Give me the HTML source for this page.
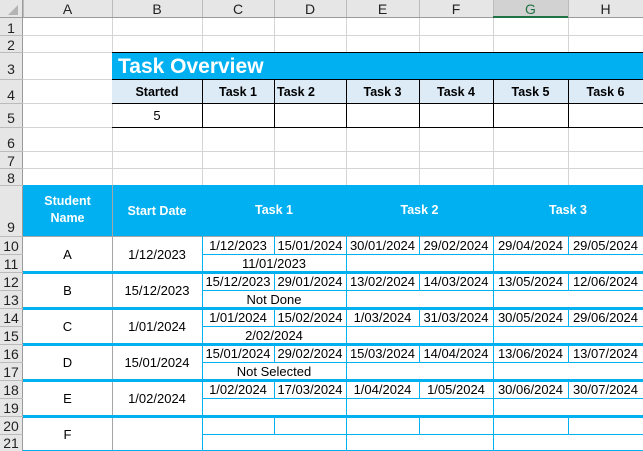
<!DOCTYPE html>
<html><head><meta charset="utf-8"><style>
*{margin:0;padding:0;box-sizing:border-box}
body{width:643px;height:451px;overflow:hidden;background:#fff;font-family:"Liberation Sans",Arial,sans-serif;position:relative;color:#000}
div{position:absolute}
.t{display:flex;align-items:center;justify-content:center;font-size:13px;white-space:nowrap}
.b{font-weight:bold;font-size:12.5px}
.w{color:#fff}
.h{background:#e6e6e6}
.g{background:#d4d4d4}
.k{background:#000}
.c{background:#00b0f0}
.m{background:#a6a6a6}
.rn{font-size:14px;color:#222}
</style></head><body>
<div class="h" style="left:0;top:0;width:643px;height:18px"></div>
<div class="h" style="left:0;top:0;width:23px;height:451px"></div>
<div style="left:493px;top:0;width:75px;height:18px;background:#d2d2d2"></div>
<div style="left:8px;top:5px;width:0;height:0;border-left:10px solid transparent;border-bottom:10px solid #b4b4b4"></div>
<div class="g" style="left:112px;top:18px;width:1px;height:167px"></div>
<div class="g" style="left:202px;top:18px;width:1px;height:167px"></div>
<div class="g" style="left:274px;top:18px;width:1px;height:167px"></div>
<div class="g" style="left:346px;top:18px;width:1px;height:167px"></div>
<div class="g" style="left:419px;top:18px;width:1px;height:167px"></div>
<div class="g" style="left:493px;top:18px;width:1px;height:167px"></div>
<div class="g" style="left:568px;top:18px;width:1px;height:167px"></div>
<div class="g" style="left:23px;top:35px;width:620px;height:1px"></div>
<div class="g" style="left:23px;top:52px;width:620px;height:1px"></div>
<div class="g" style="left:23px;top:79px;width:90px;height:1px"></div>
<div class="g" style="left:23px;top:103px;width:90px;height:1px"></div>
<div class="g" style="left:23px;top:127px;width:90px;height:1px"></div>
<div class="g" style="left:23px;top:151px;width:620px;height:1px"></div>
<div class="g" style="left:23px;top:168px;width:620px;height:1px"></div>
<div style="left:23px;top:0;width:1px;height:18px;background:#bbb"></div>
<div style="left:112px;top:0;width:1px;height:18px;background:#bbb"></div>
<div style="left:202px;top:0;width:1px;height:18px;background:#bbb"></div>
<div style="left:274px;top:0;width:1px;height:18px;background:#bbb"></div>
<div style="left:346px;top:0;width:1px;height:18px;background:#bbb"></div>
<div style="left:419px;top:0;width:1px;height:18px;background:#bbb"></div>
<div style="left:493px;top:0;width:1px;height:18px;background:#bbb"></div>
<div style="left:568px;top:0;width:1px;height:18px;background:#bbb"></div>
<div style="left:0;top:17px;width:643px;height:1px;background:#9b9b9b"></div>
<div style="left:493px;top:16px;width:75px;height:2px;background:#217346"></div>
<div style="left:22px;top:0;width:1px;height:451px;background:#9b9b9b"></div>
<div class="t rn" style="left:23px;top:0;width:89px;height:18px">A</div>
<div class="t rn" style="left:112px;top:0;width:90px;height:18px">B</div>
<div class="t rn" style="left:202px;top:0;width:72px;height:18px">C</div>
<div class="t rn" style="left:274px;top:0;width:72px;height:18px">D</div>
<div class="t rn" style="left:346px;top:0;width:73px;height:18px">E</div>
<div class="t rn" style="left:419px;top:0;width:74px;height:18px">F</div>
<div class="t rn" style="left:493px;top:0;width:75px;height:18px;color:#217346">G</div>
<div class="t rn" style="left:568px;top:0;width:75px;height:18px">H</div>
<div style="left:0;top:35px;width:23px;height:1px;background:#bbb"></div>
<div style="left:0;top:52px;width:23px;height:1px;background:#bbb"></div>
<div style="left:0;top:79px;width:23px;height:1px;background:#bbb"></div>
<div style="left:0;top:103px;width:23px;height:1px;background:#bbb"></div>
<div style="left:0;top:127px;width:23px;height:1px;background:#bbb"></div>
<div style="left:0;top:151px;width:23px;height:1px;background:#bbb"></div>
<div style="left:0;top:168px;width:23px;height:1px;background:#bbb"></div>
<div style="left:0;top:185px;width:23px;height:1px;background:#bbb"></div>
<div style="left:0;top:236px;width:23px;height:1px;background:#bbb"></div>
<div style="left:0;top:254px;width:23px;height:1px;background:#bbb"></div>
<div style="left:0;top:272px;width:23px;height:1px;background:#bbb"></div>
<div style="left:0;top:290px;width:23px;height:1px;background:#bbb"></div>
<div style="left:0;top:308px;width:23px;height:1px;background:#bbb"></div>
<div style="left:0;top:326px;width:23px;height:1px;background:#bbb"></div>
<div style="left:0;top:344px;width:23px;height:1px;background:#bbb"></div>
<div style="left:0;top:362px;width:23px;height:1px;background:#bbb"></div>
<div style="left:0;top:380px;width:23px;height:1px;background:#bbb"></div>
<div style="left:0;top:398px;width:23px;height:1px;background:#bbb"></div>
<div style="left:0;top:416px;width:23px;height:1px;background:#bbb"></div>
<div style="left:0;top:434px;width:23px;height:1px;background:#bbb"></div>
<div class="t rn" style="left:0;top:19px;width:22px;height:17px">1</div>
<div class="t rn" style="left:0;top:36px;width:22px;height:17px">2</div>
<div class="t rn" style="left:0;top:58px;width:22px;height:22px">3</div>
<div class="t rn" style="left:0;top:85px;width:22px;height:20px">4</div>
<div class="t rn" style="left:0;top:108px;width:22px;height:20px">5</div>
<div class="t rn" style="left:0;top:134px;width:22px;height:18px">6</div>
<div class="t rn" style="left:0;top:152px;width:22px;height:17px">7</div>
<div class="t rn" style="left:0;top:169px;width:22px;height:17px">8</div>
<div class="t rn" style="left:0;top:218px;width:22px;height:18px">9</div>
<div class="t rn" style="left:0;top:237px;width:22px;height:17px">10</div>
<div class="t rn" style="left:0;top:255px;width:22px;height:17px">11</div>
<div class="t rn" style="left:0;top:273px;width:22px;height:17px">12</div>
<div class="t rn" style="left:0;top:291px;width:22px;height:17px">13</div>
<div class="t rn" style="left:0;top:309px;width:22px;height:17px">14</div>
<div class="t rn" style="left:0;top:327px;width:22px;height:17px">15</div>
<div class="t rn" style="left:0;top:345px;width:22px;height:17px">16</div>
<div class="t rn" style="left:0;top:363px;width:22px;height:17px">17</div>
<div class="t rn" style="left:0;top:381px;width:22px;height:17px">18</div>
<div class="t rn" style="left:0;top:399px;width:22px;height:17px">19</div>
<div class="t rn" style="left:0;top:417px;width:22px;height:17px">20</div>
<div class="t rn" style="left:0;top:435px;width:22px;height:16px">21</div>

<div class="c" style="left:112px;top:52px;width:531px;height:27px"></div>
<div class="w" style="left:118px;top:55px;font-size:21px;font-weight:bold">Task Overview</div>
<div style="left:112px;top:79px;width:531px;height:24px;background:#ddebf7"></div>
<div class="k" style="left:112px;top:52px;width:531px;height:1px"></div>
<div class="k" style="left:112px;top:79px;width:531px;height:1px"></div>
<div class="k" style="left:112px;top:103px;width:531px;height:1px"></div>
<div class="k" style="left:112px;top:127px;width:531px;height:1px"></div>
<div class="k" style="left:202px;top:79px;width:1px;height:48px"></div>
<div class="k" style="left:274px;top:79px;width:1px;height:48px"></div>
<div class="k" style="left:346px;top:79px;width:1px;height:48px"></div>
<div class="k" style="left:419px;top:79px;width:1px;height:48px"></div>
<div class="k" style="left:493px;top:79px;width:1px;height:48px"></div>
<div class="k" style="left:568px;top:79px;width:1px;height:48px"></div>
<div class="t b" style="left:112px;top:80px;width:90px;height:23px">Started</div>
<div class="t b" style="left:202px;top:80px;width:72px;height:23px">Task 1</div>
<div class="t b" style="left:275px;top:80px;width:42px;height:23px">Task 2</div>
<div class="t b" style="left:346px;top:80px;width:73px;height:23px">Task 3</div>
<div class="t b" style="left:419px;top:80px;width:74px;height:23px">Task 4</div>
<div class="t b" style="left:493px;top:80px;width:75px;height:23px">Task 5</div>
<div class="t b" style="left:568px;top:80px;width:75px;height:23px">Task 6</div>
<div class="t" style="left:112px;top:104px;width:90px;height:23px">5</div>

<div class="c" style="left:23px;top:185px;width:620px;height:51px"></div>
<div style="left:112px;top:185px;width:1px;height:51px;background:#a6a6a6"></div>
<div class="t b w" style="left:23px;top:192px;width:89px;height:36px;text-align:center;line-height:17px">Student<br>Name</div>
<div class="t b w" style="left:112px;top:202px;width:90px;height:18px">Start Date</div>
<div class="t b w" style="left:202px;top:201px;width:144px;height:18px">Task 1</div>
<div class="t b w" style="left:346px;top:201px;width:147px;height:18px">Task 2</div>
<div class="t b w" style="left:493px;top:201px;width:150px;height:18px">Task 3</div>

<div class="m" style="left:23px;top:236px;width:620px;height:1px"></div>
<div class="m" style="left:112px;top:236px;width:1px;height:215px"></div>
<div class="c" style="left:202px;top:236px;width:1px;height:215px"></div>
<div class="c" style="left:23px;top:271px;width:620px;height:3px"></div>
<div class="c" style="left:23px;top:307px;width:620px;height:3px"></div>
<div class="c" style="left:23px;top:343px;width:620px;height:3px"></div>
<div class="c" style="left:23px;top:379px;width:620px;height:3px"></div>
<div class="c" style="left:23px;top:415px;width:620px;height:3px"></div>
<div class="c" style="left:23px;top:450px;width:620px;height:1px"></div>
<div class="c" style="left:202px;top:254px;width:441px;height:1px"></div>
<div class="c" style="left:202px;top:290px;width:441px;height:1px"></div>
<div class="c" style="left:202px;top:326px;width:441px;height:1px"></div>
<div class="c" style="left:202px;top:362px;width:441px;height:1px"></div>
<div class="c" style="left:202px;top:398px;width:441px;height:1px"></div>
<div class="c" style="left:202px;top:434px;width:441px;height:1px"></div>
<div class="c" style="left:346px;top:236px;width:1px;height:215px"></div>
<div class="c" style="left:493px;top:236px;width:1px;height:215px"></div>
<div class="c" style="left:274px;top:236px;width:1px;height:18px"></div>
<div class="c" style="left:419px;top:236px;width:1px;height:18px"></div>
<div class="c" style="left:568px;top:236px;width:1px;height:18px"></div>
<div class="c" style="left:274px;top:272px;width:1px;height:18px"></div>
<div class="c" style="left:419px;top:272px;width:1px;height:18px"></div>
<div class="c" style="left:568px;top:272px;width:1px;height:18px"></div>
<div class="c" style="left:274px;top:308px;width:1px;height:18px"></div>
<div class="c" style="left:419px;top:308px;width:1px;height:18px"></div>
<div class="c" style="left:568px;top:308px;width:1px;height:18px"></div>
<div class="c" style="left:274px;top:344px;width:1px;height:18px"></div>
<div class="c" style="left:419px;top:344px;width:1px;height:18px"></div>
<div class="c" style="left:568px;top:344px;width:1px;height:18px"></div>
<div class="c" style="left:274px;top:380px;width:1px;height:18px"></div>
<div class="c" style="left:419px;top:380px;width:1px;height:18px"></div>
<div class="c" style="left:568px;top:380px;width:1px;height:18px"></div>
<div class="c" style="left:274px;top:416px;width:1px;height:18px"></div>
<div class="c" style="left:419px;top:416px;width:1px;height:18px"></div>
<div class="c" style="left:568px;top:416px;width:1px;height:18px"></div>

<div class="t" style="left:23px;top:237px;width:89px;height:34px">A</div>
<div class="t" style="left:112px;top:237px;width:90px;height:34px">1/12/2023</div>
<div class="t" style="left:23px;top:274px;width:89px;height:33px">B</div>
<div class="t" style="left:112px;top:274px;width:90px;height:33px">15/12/2023</div>
<div class="t" style="left:23px;top:310px;width:89px;height:33px">C</div>
<div class="t" style="left:112px;top:310px;width:90px;height:33px">1/01/2024</div>
<div class="t" style="left:23px;top:346px;width:89px;height:33px">D</div>
<div class="t" style="left:112px;top:346px;width:90px;height:33px">15/01/2024</div>
<div class="t" style="left:23px;top:382px;width:89px;height:33px">E</div>
<div class="t" style="left:112px;top:382px;width:90px;height:33px">1/02/2024</div>
<div class="t" style="left:23px;top:418px;width:89px;height:32px">F</div>

<div class="t" style="left:202px;top:237px;width:72px;height:17px">1/12/2023</div>
<div class="t" style="left:274px;top:237px;width:72px;height:17px">15/01/2024</div>
<div class="t" style="left:346px;top:237px;width:73px;height:17px">30/01/2024</div>
<div class="t" style="left:419px;top:237px;width:74px;height:17px">29/02/2024</div>
<div class="t" style="left:493px;top:237px;width:75px;height:17px">29/04/2024</div>
<div class="t" style="left:568px;top:237px;width:75px;height:17px">29/05/2024</div>
<div class="t" style="left:202px;top:255px;width:144px;height:16px">11/01/2023</div>
<div class="t" style="left:202px;top:273px;width:72px;height:17px">15/12/2023</div>
<div class="t" style="left:274px;top:273px;width:72px;height:17px">29/01/2024</div>
<div class="t" style="left:346px;top:273px;width:73px;height:17px">13/02/2024</div>
<div class="t" style="left:419px;top:273px;width:74px;height:17px">14/03/2024</div>
<div class="t" style="left:493px;top:273px;width:75px;height:17px">13/05/2024</div>
<div class="t" style="left:568px;top:273px;width:75px;height:17px">12/06/2024</div>
<div class="t" style="left:202px;top:291px;width:144px;height:16px">Not Done</div>
<div class="t" style="left:202px;top:309px;width:72px;height:17px">1/01/2024</div>
<div class="t" style="left:274px;top:309px;width:72px;height:17px">15/02/2024</div>
<div class="t" style="left:346px;top:309px;width:73px;height:17px">1/03/2024</div>
<div class="t" style="left:419px;top:309px;width:74px;height:17px">31/03/2024</div>
<div class="t" style="left:493px;top:309px;width:75px;height:17px">30/05/2024</div>
<div class="t" style="left:568px;top:309px;width:75px;height:17px">29/06/2024</div>
<div class="t" style="left:202px;top:327px;width:144px;height:16px">2/02/2024</div>
<div class="t" style="left:202px;top:345px;width:72px;height:17px">15/01/2024</div>
<div class="t" style="left:274px;top:345px;width:72px;height:17px">29/02/2024</div>
<div class="t" style="left:346px;top:345px;width:73px;height:17px">15/03/2024</div>
<div class="t" style="left:419px;top:345px;width:74px;height:17px">14/04/2024</div>
<div class="t" style="left:493px;top:345px;width:75px;height:17px">13/06/2024</div>
<div class="t" style="left:568px;top:345px;width:75px;height:17px">13/07/2024</div>
<div class="t" style="left:202px;top:363px;width:144px;height:16px">Not Selected</div>
<div class="t" style="left:202px;top:381px;width:72px;height:17px">1/02/2024</div>
<div class="t" style="left:274px;top:381px;width:72px;height:17px">17/03/2024</div>
<div class="t" style="left:346px;top:381px;width:73px;height:17px">1/04/2024</div>
<div class="t" style="left:419px;top:381px;width:74px;height:17px">1/05/2024</div>
<div class="t" style="left:493px;top:381px;width:75px;height:17px">30/06/2024</div>
<div class="t" style="left:568px;top:381px;width:75px;height:17px">30/07/2024</div>
</body></html>
